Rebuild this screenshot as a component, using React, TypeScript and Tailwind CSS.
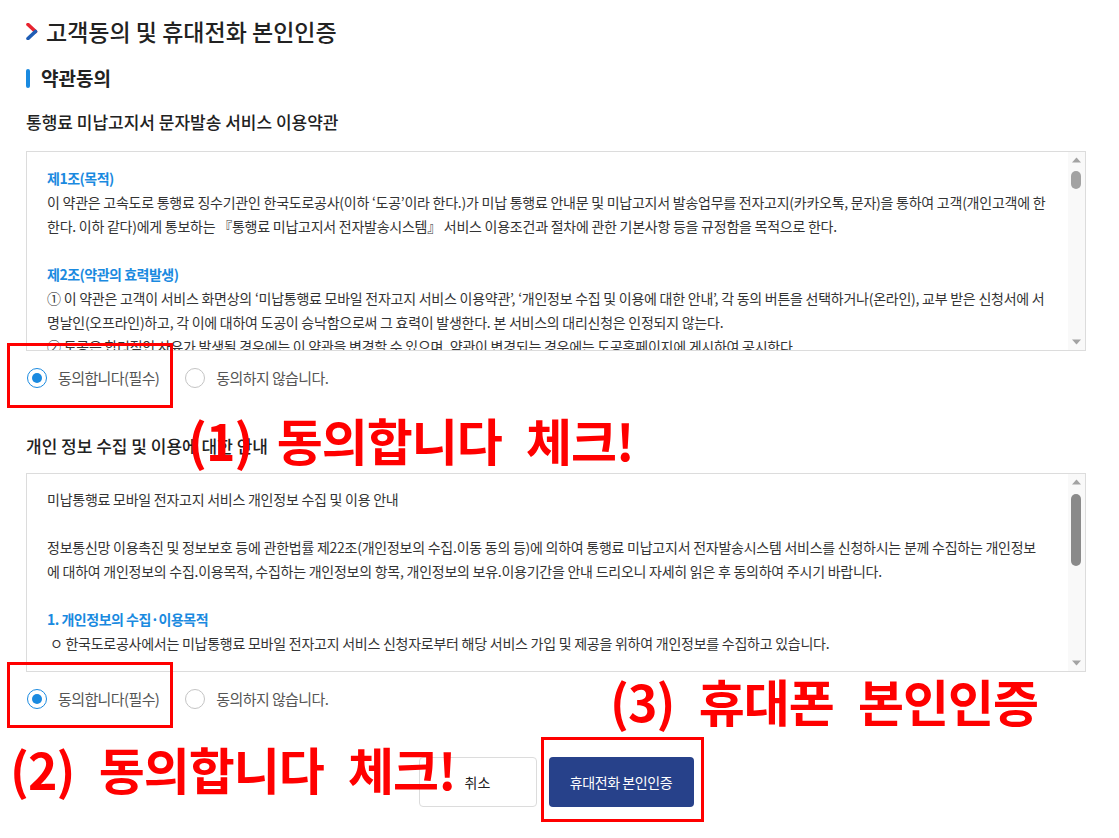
import React from 'react';

const body = "font-['Noto_Sans_CJK_KR','Noto_Sans',sans-serif]";

function Chevron() {
  return (
    <svg width="12" height="17" viewBox="0 0 12 17" className="shrink-0">
      <path d="M2 1.5 L9.5 8.5" stroke="#e8232f" strokeWidth="3.6" strokeLinecap="round" />
      <path d="M9.5 8.5 L2 15.5" stroke="#1f5db5" strokeWidth="3.6" strokeLinecap="round" />
    </svg>
  );
}

function Scrollbar({ thumbTop, thumbHeight, thumbColor }: { thumbTop: number; thumbHeight: number; thumbColor: string }) {
  return (
    <div className="w-[17px] shrink-0 bg-[#f9f9f9] flex flex-col items-center py-[5px]">
      <svg width="9" height="6" viewBox="0 0 9 6">
        <path d="M0 5.5 L4.5 0.5 L9 5.5 Z" fill="#a3a3a3" />
      </svg>
      <div className="flex-1 w-full relative">
        <div
          className="absolute left-[3px] w-[10px] rounded-full"
          style={{ top: thumbTop, height: thumbHeight, background: thumbColor }}
        />
      </div>
      <svg width="9" height="6" viewBox="0 0 9 6">
        <path d="M0 0.5 L4.5 5.5 L9 0.5 Z" fill="#a3a3a3" />
      </svg>
    </div>
  );
}

function Radio({ checked, label }: { checked?: boolean; label: string }) {
  return (
    <label className="flex items-center gap-[11px]">
      <span
        className={
          checked
            ? 'w-[20px] h-[20px] rounded-full border border-[#1a8ae0] flex items-center justify-center bg-white'
            : 'w-[20px] h-[20px] rounded-full border border-[#c4c4c4] bg-white'
        }
      >
        {checked && <span className="w-[10px] h-[10px] rounded-full bg-[#1a8ae0]" />}
      </span>
      <span className="text-[15px] text-[#555] tracking-[-0.6px]">{label}</span>
    </label>
  );
}

function AgreeRow() {
  return (
    <div className="h-[24px] flex items-center gap-[26px] pl-[1px]">
      <Radio checked label="동의합니다(필수)" />
      <Radio label="동의하지 않습니다." />
    </div>
  );
}

const terms = [
  { head: '제1조(목적)' },
  {
    text: [
      '이 약관은 고속도로 통행료 징수기관인 한국도로공사(이하 ‘도공’이라 한다.)가 미납 통행료 안내문 및 미납고지서 발송업무를 전자고지(카카오톡, 문자)을 통하여 고객(개인고객에 한',
      '한다. 이하 같다)에게 통보하는 『통행료 미납고지서 전자발송시스템』 서비스 이용조건과 절차에 관한 기본사항 등을 규정함을 목적으로 한다.',
    ],
  },
  { blank: true },
  { head: '제2조(약관의 효력발생)' },
  {
    text: [
      '① 이 약관은 고객이 서비스 화면상의 ‘미납통행료 모바일 전자고지 서비스 이용약관’, ‘개인정보 수집 및 이용에 대한 안내’, 각 동의 버튼을 선택하거나(온라인), 교부 받은 신청서에 서',
      '명날인(오프라인)하고, 각 이에 대하여 도공이 승낙함으로써 그 효력이 발생한다. 본 서비스의 대리신청은 인정되지 않는다.',
      '② 도공은 합리적인 사유가 발생될 경우에는 이 약관을 변경할 수 있으며, 약관이 변경되는 경우에는 도공홈페이지에 게시하여 공시한다.',
      '③ 고객은 변경된 약관에 동의하지 않을 경우 서비스 해지를 요청할 수 있다.',
    ],
  },
];

const privacy = [
  { text: ['미납통행료 모바일 전자고지 서비스 개인정보 수집 및 이용 안내'] },
  { blank: true },
  {
    text: [
      '정보통신망 이용촉진 및 정보보호 등에 관한법률 제22조(개인정보의 수집.이동 동의 등)에 의하여 통행료 미납고지서 전자발송시스템 서비스를 신청하시는 분께 수집하는 개인정보',
      '에 대하여 개인정보의 수집.이용목적, 수집하는 개인정보의 항목, 개인정보의 보유.이용기간을 안내 드리오니 자세히 읽은 후 동의하여 주시기 바랍니다.',
    ],
  },
  { blank: true },
  { head: '1. 개인정보의 수집·이용목적' },
  {
    text: [
      '\u00a0ㅇ 한국도로공사에서는 미납통행료 모바일 전자고지 서비스 신청자로부터 해당 서비스 가입 및 제공을 위하여 개인정보를 수집하고 있습니다.',
      '',
      '2. 수집하는 개인정보의 항목',
    ],
  },
];

type Block = { head?: string; text?: string[]; blank?: boolean };

function ScrollBox({
  blocks,
  height,
  pt,
  thumbTop,
  thumbHeight,
  thumbColor,
}: {
  blocks: Block[];
  height: string;
  pt: string;
  thumbTop: number;
  thumbHeight: number;
  thumbColor: string;
}) {
  return (
    <div className={`w-[1060px] ${height} border border-[#dcdcdc] flex bg-white`}>
      <div className={`flex-1 overflow-hidden pl-[20px] pr-[16px] ${pt}`}>
        {blocks.map((b, i) => {
          if (b.blank) return <div key={i} className="h-[24px]" />;
          if (b.head)
            return (
              <div key={i} className="leading-[24px] text-[14px] font-bold text-[#1a8ae0] tracking-[-0.5px]">
                {b.head}
              </div>
            );
          return (
            <div key={i}>
              {b.text!.map((t, j) => (
                <div key={j} className="leading-[24px] h-[24px] text-[14px] text-[#333] tracking-[-0.25px] whitespace-nowrap">
                  {t}
                </div>
              ))}
            </div>
          );
        })}
      </div>
      <Scrollbar thumbTop={thumbTop} thumbHeight={thumbHeight} thumbColor={thumbColor} />
    </div>
  );
}

export default function App() {
  return (
    <div className={`relative min-h-[838px] bg-white pl-[26px] pt-[16px] ${body}`}>
      {/* page title */}
      <div className="h-[30px] flex items-center gap-[8px]">
        <Chevron />
        <h1 className="text-[23px] font-medium text-[#222]">고객동의 및 휴대전화 본인인증</h1>
      </div>

      <div className="mt-[20px] h-[24px] flex items-center gap-[11px]">
        <span className="w-[4px] h-[19px] rounded-full bg-[#1a8ae0]" />
        <h2 className="text-[19px] font-bold text-[#222]">약관동의</h2>
      </div>

      <h3 className="mt-[20px] h-[24px] leading-[24px] text-[17px] font-medium text-[#222]">
        통행료 미납고지서 문자발송 서비스 이용약관
      </h3>
      <div className="mt-[17px]">
        <ScrollBox blocks={terms} height="h-[200px]" pt="pt-[14px]" thumbTop={8} thumbHeight={18} thumbColor="#a2a2a2" />
      </div>
      <div className="mt-[15px]">
        <AgreeRow />
      </div>

      <h3 className="mt-[44px] h-[24px] leading-[24px] text-[17px] font-medium text-[#222]">
        개인 정보 수집 및 이용에 대한 안내
      </h3>
      <div className="mt-[15px]">
        <ScrollBox blocks={privacy} height="h-[199px]" pt="pt-[13px]" thumbTop={9} thumbHeight={72} thumbColor="#8a8a8a" />
      </div>
      <div className="mt-[15px]">
        <AgreeRow />
      </div>

      <div className="mt-[46px] w-[1060px] flex justify-center gap-[12px]">
        <button className="w-[118px] h-[50px] rounded-[4px] border border-[#dcdcdc] bg-white text-[14px] text-[#222]">
          취소
        </button>
        <button className="w-[145px] h-[50px] rounded-[4px] bg-[#27418a] text-[14px] text-white tracking-[-0.4px]">
          휴대전화 본인인증
        </button>
      </div>

      {/* red guide annotations */}
      <div className="absolute left-[7px] top-[343px] w-[166px] h-[65px] border-[3px] border-[#ff0000]" />
      <div className="absolute left-[7px] top-[662px] w-[166px] h-[66px] border-[3px] border-[#ff0000]" />
      <div className="absolute left-[541px] top-[737px] w-[163px] h-[85px] border-[3px] border-[#ff0000]" />
      <div className="absolute left-[188px] top-[409px] text-[50px] leading-[60px] font-bold text-[#ff0000] tracking-[-1px] [word-spacing:14px] whitespace-nowrap">
        (1) 동의합니다 체크!
      </div>
      <div className="absolute left-[10px] top-[738px] text-[50px] leading-[60px] font-bold text-[#ff0000] tracking-[-1px] [word-spacing:14px] whitespace-nowrap">
        (2) 동의합니다 체크!
      </div>
      <div className="absolute left-[610px] top-[670px] text-[50px] leading-[60px] font-bold text-[#ff0000] tracking-[-1px] [word-spacing:14px] whitespace-nowrap">
        (3) 휴대폰 본인인증
      </div>
    </div>
  );
}
